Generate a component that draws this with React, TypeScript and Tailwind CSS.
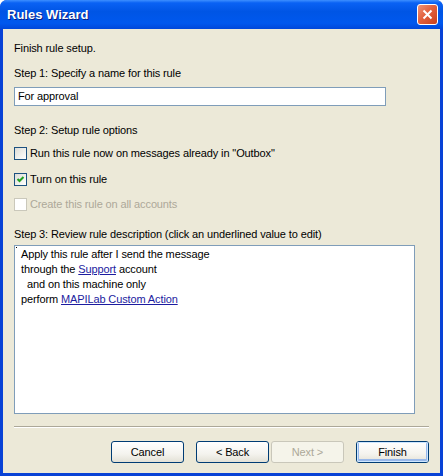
const font = "font-['Tahoma','Liberation_Sans',sans-serif]"

function Checkbox({ checked, disabled, label }: { checked?: boolean; disabled?: boolean; label: string }) {
  return (
    <div className="flex h-[13px] items-center">
      <div
        className={
          disabled
            ? 'relative h-[13px] w-[13px] shrink-0 border border-[#CAC8BB] bg-white'
            : 'relative h-[13px] w-[13px] shrink-0 border border-[#1C5180] bg-[linear-gradient(135deg,#DCDCD7_0%,#F2F2EE_60%,#FFFFFF_100%)]'
        }
      >
        {checked && (
          <svg viewBox="0 0 11 11" className="absolute left-0 top-0 h-[11px] w-[11px]">
            <path d="M2.5 5 L4.5 7 L8.5 3" fill="none" stroke="#21A121" strokeWidth="2" />
          </svg>
        )}
      </div>
      <span className={disabled ? 'ml-[3px] leading-[13px] text-[#ACA899]' : 'ml-[3px] leading-[13px] text-black'}>
        {label}
      </span>
    </div>
  )
}

function Button({ label, disabled, primary }: { label: string; disabled?: boolean; primary?: boolean }) {
  if (disabled) {
    return (
      <div className="flex h-[22px] w-[73px] items-center justify-center rounded-[3px] border border-[#C9C7BA] bg-[#F5F4EA] text-[#ACA899]">
        {label}
      </div>
    )
  }
  return (
    <div className="flex h-[22px] w-[73px] items-center justify-center rounded-[3px] border border-[#003C74] bg-[linear-gradient(180deg,#FFFFFF_0%,#F4F3EE_60%,#E3E1D6_100%)] text-black">
      <div
        className={
          primary
            ? 'flex h-full w-full items-center justify-center rounded-[2px] shadow-[inset_0_0_0_1px_#CEE7FF,inset_0_-1px_0_2px_#98B8EA]'
            : 'flex h-full w-full items-center justify-center rounded-[2px]'
        }
      >
        {label}
      </div>
    </div>
  )
}

export default function App() {
  return (
    <div className={`${font} h-[476px] w-[443px] bg-white text-[11px] tracking-[-0.12px]`}>
      <div className="flex h-full w-full flex-col overflow-hidden rounded-t-[7px] bg-[#0842D6]">
        <div className="flex h-[29px] shrink-0 items-center justify-between bg-[linear-gradient(180deg,#3D8FFF_0%,#0A62F4_10%,#0055E5_40%,#0058EE_80%,#0047DA_100%)] pl-[7px] pr-[5px]">
          <span className="font-['Trebuchet_MS','Liberation_Sans',sans-serif] text-[13px] font-bold tracking-normal text-white [text-shadow:1px_1px_0_#0A1E80]">
            Rules Wizard
          </span>
          <div className="flex h-[21px] w-[21px] items-center justify-center rounded-[3px] border border-white bg-[linear-gradient(135deg,#F09478_0%,#E2613E_45%,#C8401C_100%)]">
            <svg viewBox="0 0 11 11" className="h-[11px] w-[11px]">
              <path d="M1.5 1.5 L9.5 9.5 M9.5 1.5 L1.5 9.5" stroke="white" strokeWidth="2" />
            </svg>
          </div>
        </div>

        <div className="mx-[3px] mb-[3px] flex flex-1 flex-col bg-[#ECE9D8] px-[11px] pt-[13px] text-black">
          <div className="leading-[13px]">Finish rule setup.</div>

          <div className="mt-[12px] leading-[13px]">Step 1: Specify a name for this rule</div>
          <div className="mt-[7px] flex h-[19px] w-[372px] items-center border border-[#7F9DB9] bg-white pl-[3px]">
            For approval
          </div>

          <div className="mt-[18px] leading-[13px]">Step 2: Setup rule options</div>
          <div className="mt-[10px]">
            <Checkbox label={'Run this rule now on messages already in "Outbox"'} />
          </div>
          <div className="mt-[13px]">
            <Checkbox checked label="Turn on this rule" />
          </div>
          <div className="mt-[12px]">
            <Checkbox disabled label="Create this rule on all accounts" />
          </div>

          <div className="mt-[17px] leading-[13px]">Step 3: Review rule description (click an underlined value to edit)</div>
          <div className="relative mt-[4px] h-[169px] w-[401px] border border-[#7F9DB9] bg-white pl-[6px] pt-[1px] leading-[15px]">
            <span className="absolute left-[1px] top-[1px] h-px w-px bg-black" />
            <div>Apply this rule after I send the message</div>
            <div>
              through the <span className="text-[#1C1CA0] underline">Support</span> account
            </div>
            <div className="pl-[6px]">and on this machine only</div>
            <div>
              perform <span className="text-[#1C1CA0] underline">MAPILab Custom Action</span>
            </div>
          </div>

          <div className="mt-[12px] h-[2px] border-t border-b border-t-[#ACA899] border-b-white" />

          <div className="mt-[13px] flex justify-end">
            <Button label="Cancel" />
            <div className="ml-[12px]">
              <Button label="< Back" />
            </div>
            <div className="ml-[2px]">
              <Button label="Next >" disabled />
            </div>
            <div className="ml-[12px]">
              <Button label="Finish" primary />
            </div>
          </div>
        </div>
      </div>
    </div>
  )
}
